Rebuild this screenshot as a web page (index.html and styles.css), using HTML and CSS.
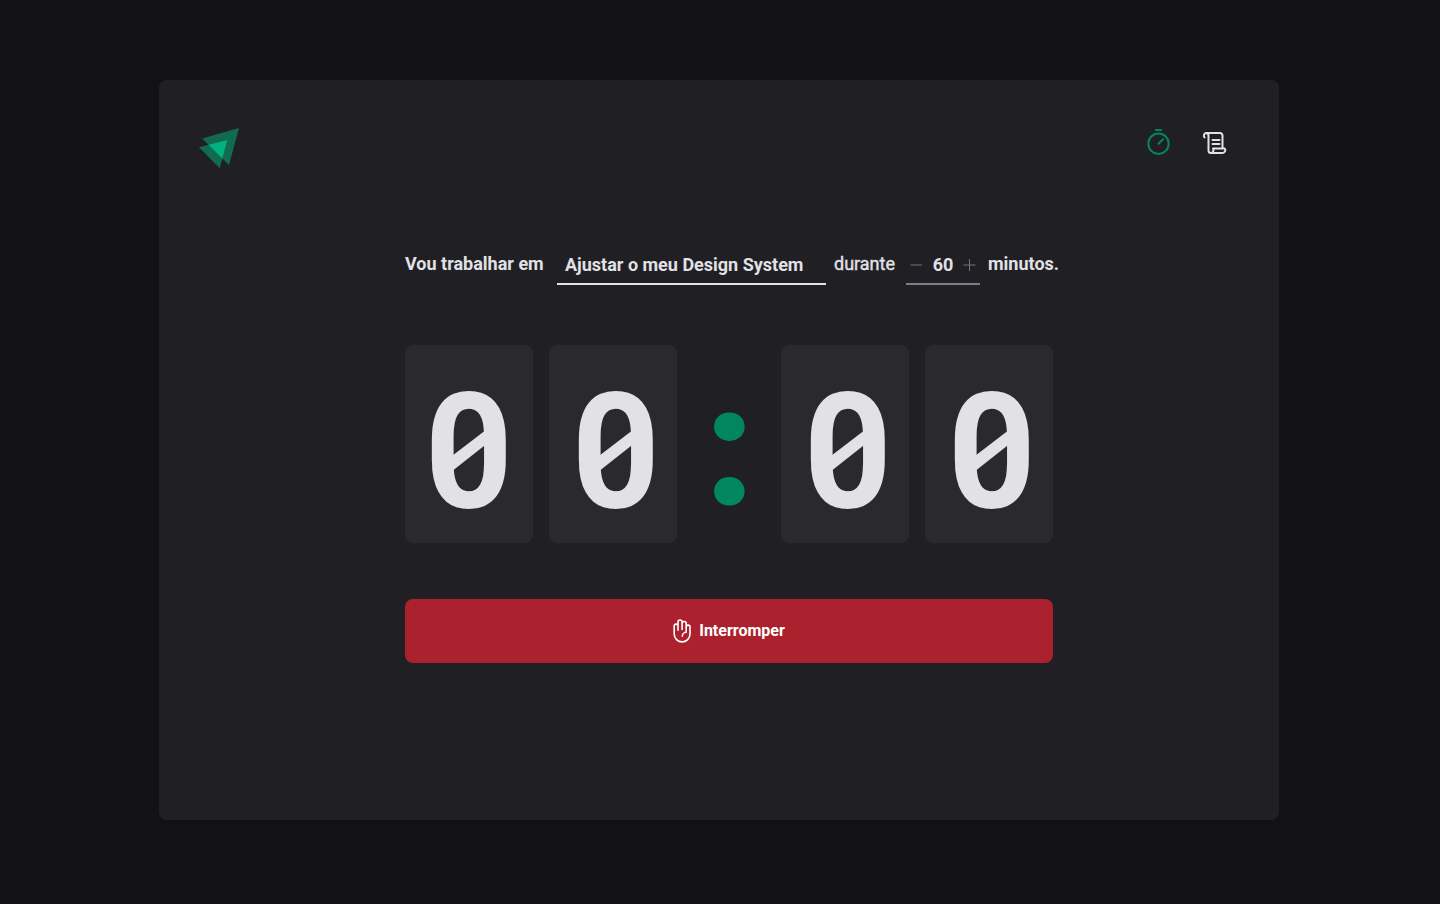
FILE: index.html
```html
<!DOCTYPE html>
<html lang="pt-BR">
<head>
<meta charset="utf-8">
<title>Timer</title>
<link rel="stylesheet" href="styles.css">
</head>
<body>
<div class="card">
  <header class="header">
    <svg class="logo" viewBox="0 0 42 42" aria-label="Logo">
      <defs><clipPath id="front"><path d="M41 1 31 38 4.200 11.500Z"/></clipPath></defs>
      <path class="logo-dark" d="M41 1 31 38 4.200 11.500ZM1 20.300 29.300 13 21.700 41.200Z"/>
      <path class="logo-bright" clip-path="url(#front)" d="M1 20.300 29.300 13 21.700 41.200Z"/>
    </svg>
    <nav class="nav">
      <a class="nav-link active"><svg viewBox="0 0 32 32"><circle cx="15.500" cy="17.700" r="10.200"/><path d="M15.500 17.700 20 13.200M12.900 4h5.200"/></svg></a>
      <a class="nav-link"><svg viewBox="0 0 32 32"><path d="M13.500 14h7M13.500 18h7M5.500 11.400A2.700 2.700 0 0 1 7 7H21A2.500 2.500 0 0 1 23.500 9.500V22M7 7A2.500 2.500 0 0 1 9.500 9.500V24.500A2.500 2.500 0 0 0 12 27H23.500A2.700 2.700 0 0 0 25.600 22.500H14A2.900 2.900 0 0 1 12 27"/></svg></a>
    </nav>
  </header>
  <main class="main">
    <div class="task">
      <span class="intro">Vou trabalhar em</span>
      <span class="field name">Ajustar o meu Design System</span>
      <span class="during">durante</span>
      <span class="field minutes">
        <svg class="step" viewBox="0 0 12 12"><path d="M.5 6H12"/></svg>
        <span>60</span>
        <svg class="step" viewBox="0 0 12 12"><path d="M-.5 6H11.500M5.500 0V12"/></svg>
      </span>
      <span class="end">minutos.</span>
    </div>
    <div class="clock">
      <div class="digit first"><span class="zero">0</span></div>
      <div class="digit"><span class="zero">0</span></div>
      <div class="separator"><span class="colon">:</span></div>
      <div class="digit"><span class="zero">0</span></div>
      <div class="digit"><span class="zero">0</span></div>
    </div>
    <button class="stop">
      <svg class="hand" viewBox="0 0 24 24"><path d="M16.200 10.500V8a1.900 1.900 0 0 1 3.800 0v7a7.900 7.900 0 0 1-15.800 0V7a1.900 1.900 0 0 1 3.800 0v4.200M8 11.200V3a2 2 0 0 1 4.100 0v7.500M12.100 10.500V4.500a2 2 0 0 1 4.100 0v8.800a3.900 3.900 0 0 0-3.900 3.900"/></svg>
      <span class="stop-label">Interromper</span>
    </button>
  </main>
</div>
</body>
</html>
```
FILE: styles.css
```css
* { box-sizing: border-box; }
body { margin: 0; height: 904px; overflow: hidden; background: #121214; color: #e1e1e6; font-family: Roboto, sans-serif; -webkit-font-smoothing: antialiased; }
.card { width: 1120px; height: 740px; margin: 80px 0 0 158.500px; padding: 47px 48px 40px 40px; background: #202024; border-radius: 8px; }
.header { display: flex; justify-content: space-between; align-items: flex-start; height: 120px; }
.logo { width: 42px; height: 42px; margin-left: -.5px; }
.logo-dark { fill: #136b4f; }
.logo-bright { fill: #00b37e; }
.nav { display: flex; gap: 24px; margin-top: -1px; }
.nav-link { width: 32px; height: 32px; color: #e1e1e6; }
.nav-link.active { color: #00875f; }
.nav-link svg { display: block; width: 32px; height: 32px; fill: none; stroke: currentColor; stroke-width: 2; stroke-linecap: round; stroke-linejoin: round; }
.main { width: 654px; margin: 0 0 0 206.500px; }
.task { display: flex; height: 38px; font-size: 18px; font-weight: 700; line-height: 34px; white-space: nowrap; }
.intro { width: 152px; }
.field { height: 38px; line-height: 36px; border-bottom: 2px solid #e1e1e6; }
.name { width: 269px; padding-left: 8px; }
.during { width: 80px; padding-left: 8px; font-weight: 400; -webkit-text-stroke: .4px #e1e1e6; }
.minutes { width: 74px; display: flex; align-items: center; justify-content: space-between; padding: 0 4px; border-color: #7c7c8a; }
.step { width: 12px; height: 12px; overflow: visible; stroke: #7c7c8a; fill: none; stroke-width: .9; }
.end { padding-left: 8px; }
.clock { display: flex; gap: 16px; width: 648px; margin-top: 60px; }
.digit { width: 128px; height: 198px; display: flex; justify-content: center; background: #29292e; border-radius: 8px; font-size: 160px; font-weight: 700; line-height: 215px; padding-left: 6px; }
.digit.first { padding-left: 0; }
.zero { position: relative; display: block; transform: translateY(-.5px) scale(.96, 1.005); }
.zero::after { content: ""; position: absolute; left: 50%; top: 86px; width: 34px; height: 40px; margin-left: -17px; background: #e1e1e6; clip-path: polygon(0 25px, 100% 0, 100% 14.500px, 0 100%); }
.separator { width: 72px; height: 198px; display: flex; justify-content: center; padding-left: 1px; color: #00875f; font-size: 160px; font-weight: 700; line-height: 206px; -webkit-text-stroke: 5px #00875f; }
.stop { display: flex; align-items: center; justify-content: center; gap: 5px; width: 648px; height: 64px; margin-top: 56px; padding: 0 9px 0 6px; border: 0; border-radius: 8px; background: #ab222e; color: #fff; font: 700 16px Roboto, sans-serif; }
.stop-label { padding-bottom: 2px; }
.hand { width: 24px; height: 24px; fill: none; stroke: currentColor; stroke-width: 1.600; stroke-linecap: round; stroke-linejoin: round; }
```
